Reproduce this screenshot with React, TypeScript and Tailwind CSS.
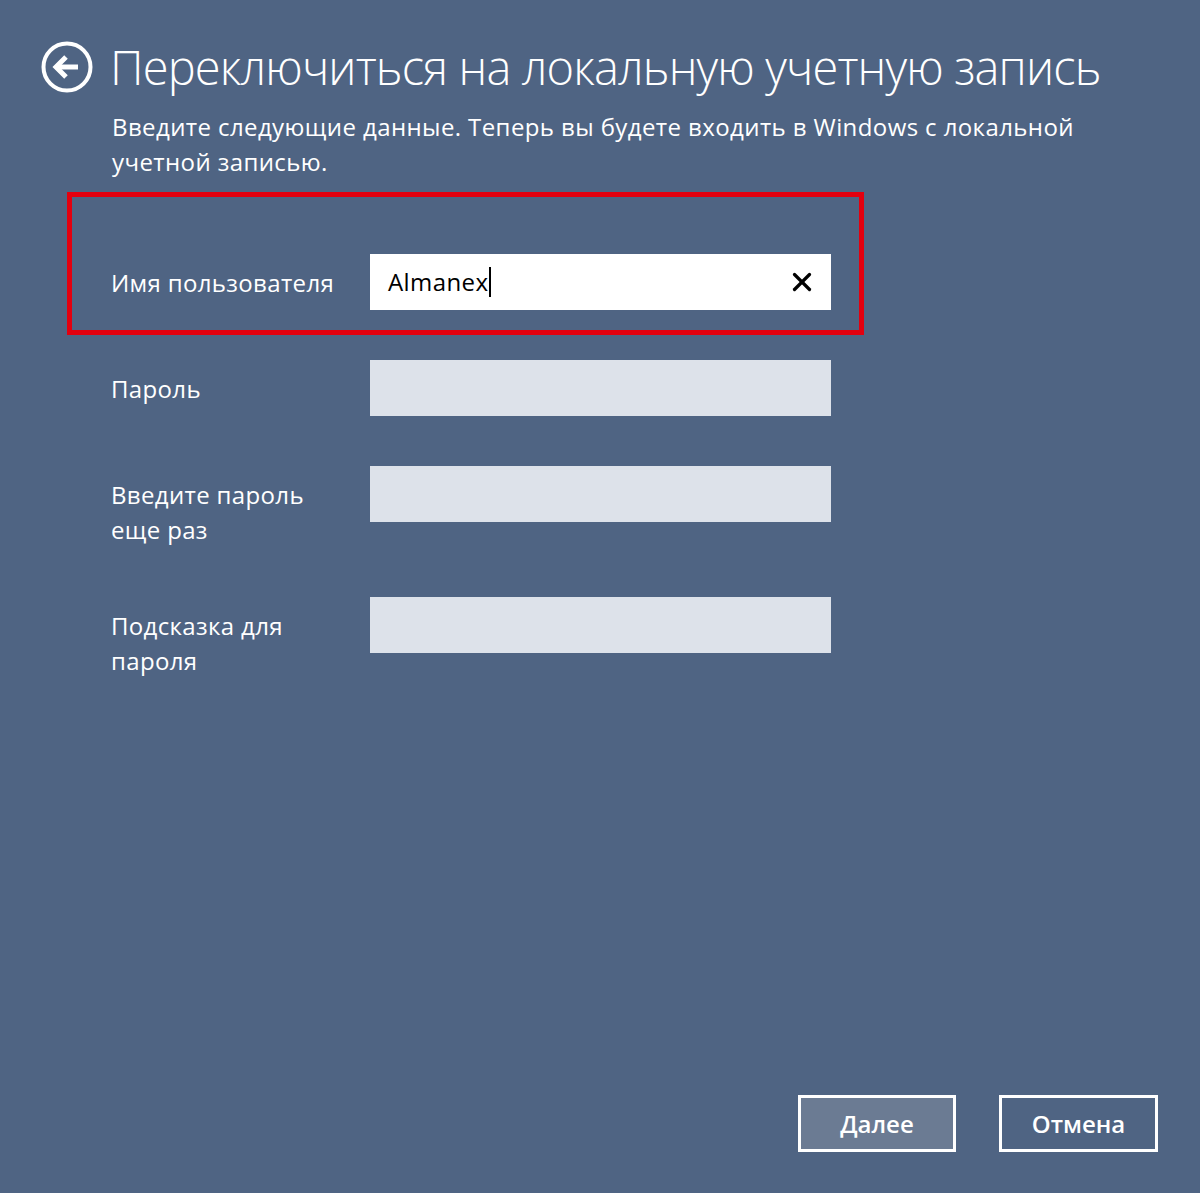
import { X } from 'lucide-react';

const font = { fontFamily: '"Open Sans", "Noto Sans", sans-serif' };

function BackIcon() {
  return (
    <svg width="52" height="52" viewBox="0 0 52 52" fill="none">
      <circle cx="26" cy="26" r="23.5" stroke="white" strokeWidth="4" />
      <path d="M37 26H16" stroke="white" strokeWidth="5" strokeLinecap="butt" />
      <path d="M25 16L15 26L25 36" stroke="white" strokeWidth="5" strokeLinejoin="miter" />
    </svg>
  );
}

function Row({ label, children }: { label: React.ReactNode; children?: React.ReactNode }) {
  return (
    <div className="flex items-start">
      <div className="w-[259px] shrink-0 pt-[11px] text-[24px] leading-[35px] text-white tracking-[0.35px]">
        {label}
      </div>
      {children ?? <div className="w-[461px] h-[56px] bg-[#dde2ea]" />}
    </div>
  );
}

export default function App() {
  return (
    <div className="w-[1200px] h-[1193px] bg-[#4f6483] flex flex-col" style={font}>
      {/* Header */}
      <div className="flex items-center pt-[40px] pl-[41px]">
        <BackIcon />
        <h1 className="ml-[17px] text-[47px] leading-[54px] font-light text-white tracking-[-0.85px]">
          Переключиться на локальную учетную запись
        </h1>
      </div>
      <p className="ml-[112px] mt-[15px] w-[1000px] text-[24px] leading-[35px] text-white tracking-[0.4px]">
        Введите следующие данные. Теперь вы будете входить в Windows с локальной учетной записью.
      </p>

      {/* Highlighted user name row */}
      <div className="ml-[67px] mt-[13px] w-[797px] h-[143px] border-[5px] border-[#e3000f] pl-[39px] pt-[57px]">
        <Row label="Имя пользователя">
          <div className="w-[461px] h-[56px] bg-white flex items-center pl-[18px] pr-[14px]">
            <span className="text-[24px] text-black tracking-[0.4px]">Almanex</span>
            <span className="w-[1.5px] h-[30px] bg-black ml-[1px]" />
            <X className="ml-auto text-black" size={30} strokeWidth={2.6} />
          </div>
        </Row>
      </div>

      <div className="ml-[111px] mt-[25px] flex flex-col gap-[50px]">
        <Row label="Пароль" />
        <Row label={<>Введите пароль<br />еще раз</>} />
        <Row label={<>Подсказка для<br />пароля</>} />
      </div>

      {/* Buttons */}
      <div className="mt-auto mb-[41px] mr-[42px] flex justify-end gap-[43px]">
        <button className="w-[158px] h-[57px] border-[3px] border-white bg-[#6b7b93] text-white text-[24px] font-semibold">
          Далее
        </button>
        <button className="w-[159px] h-[57px] border-[3px] border-white bg-[#4f6483] text-white text-[24px] font-semibold">
          Отмена
        </button>
      </div>
    </div>
  );
}
